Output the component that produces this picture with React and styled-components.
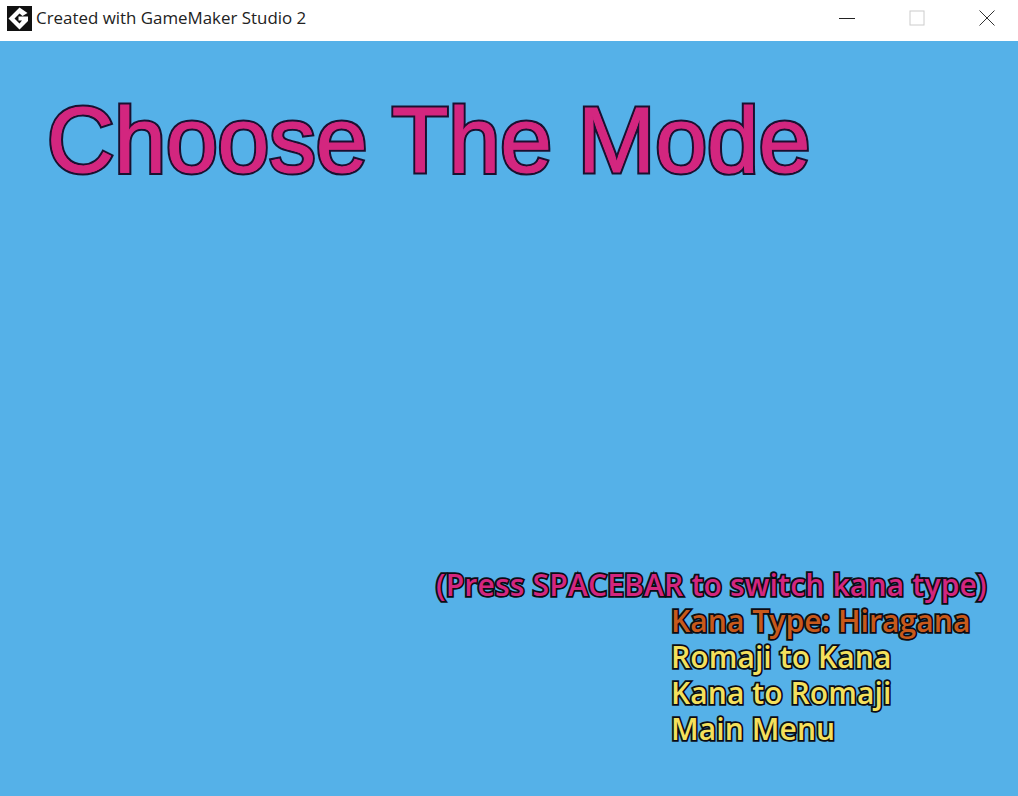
import styled, { createGlobalStyle } from 'styled-components';

const GlobalStyle = createGlobalStyle`
  html, body {
    margin: 0;
    padding: 0;
    overflow: hidden;
  }
`;

const Window = styled.div`
  display: flex;
  flex-direction: column;
  width: 1018px;
  height: 796px;
`;

const TitleBar = styled.div`
  display: flex;
  align-items: flex-start;
  height: 41px;
  background-color: #fff;
  flex-shrink: 0;
`;

const AppIcon = styled.svg`
  width: 25px;
  height: 25px;
  margin: 6px 4px 0 7px;
`;

const WindowTitle = styled.span`
  flex: 1;
  font-family: 'Open Sans', sans-serif;
  font-size: 16.9px;
  line-height: 36px;
  color: #222;
`;

const WindowButton = styled.div`
  display: flex;
  align-items: center;
  justify-content: center;
  box-sizing: border-box;
  width: 70px;
  height: 36px;
  padding-left: 7px;
  svg {
    display: block;
  }
`;

const Stage = styled.main`
  flex: 1;
  display: flex;
  flex-direction: column;
  justify-content: space-between;
  background-color: #55b1e8;
  padding: 42px 30px 49px 47px;
`;

const Heading = styled.h1`
  position: relative;
  margin: 0;
  font-family: 'Liberation Sans', Arial, sans-serif;
  font-weight: 400;
  font-size: 93px;
  line-height: 115px;
  color: #d3267f;
  -webkit-text-stroke: 5px #1a1030;
  paint-order: stroke fill;

  /* fattens the fill a little, the game font is heavier than the outline leaves it */
  &::after {
    content: attr(data-text);
    position: absolute;
    left: 0;
    top: 0;
    -webkit-text-stroke: 1px #d3267f;
  }
`;

const Menu = styled.div`
  display: flex;
  flex-direction: column;
  align-self: flex-end;
  width: 317px;
`;

const MenuItem = styled.div`
  font-family: 'Open Sans', sans-serif;
  font-size: 30px;
  font-weight: 600;
  line-height: 36px;
  letter-spacing: ${(p) => (p.$hint ? '0.2px' : '0.1px')};
  white-space: nowrap;
  color: ${(p) => p.$color || '#f4e05c'};
  -webkit-text-stroke: 3.5px #0c0c14;
  paint-order: stroke fill;
  text-shadow: 1px 1px 0 #0c0c14;
  ${(p) => p.$hint && 'margin-left: -235px;'}
`;

const App = () => {
  return (
    <Window>
      <GlobalStyle />
      <TitleBar>
        <AppIcon viewBox="0 0 25 25">
          <rect width="25" height="25" fill="#111" />
          <path
            d="M12.5 1.5 L1.5 12.5 L12.5 23.5 L21 15 L21 10.5 L11.5 10.5 L11.5 14.5 L15 14.5 L12.5 17.5 L7.5 12.5 L12.5 7.5 L15.5 10 L20.5 7 Z"
            fill="#fff"
          />
        </AppIcon>
        <WindowTitle>Created with GameMaker Studio 2</WindowTitle>
        <WindowButton>
          <svg width="16" height="16" viewBox="0 0 16 16">
            <path d="M0 8.5 H16" stroke="#222" strokeWidth="1" />
          </svg>
        </WindowButton>
        <WindowButton>
          <svg width="16" height="16" viewBox="0 0 16 16">
            <rect x="1" y="1" width="14" height="14" fill="none" stroke="#ccc" strokeWidth="1" />
          </svg>
        </WindowButton>
        <WindowButton>
          <svg width="16" height="16" viewBox="0 0 16 16">
            <path d="M0.5 0.5 L15.5 15.5 M15.5 0.5 L0.5 15.5" stroke="#333" strokeWidth="1" />
          </svg>
        </WindowButton>
      </TitleBar>
      <Stage>
        <Heading data-text="Choose The Mode">Choose The Mode</Heading>
        <Menu>
          <MenuItem $hint $color="#d3267f">(Press SPACEBAR to switch kana type)</MenuItem>
          <MenuItem $color="#c8591b">Kana Type: Hiragana</MenuItem>
          <MenuItem>Romaji to Kana</MenuItem>
          <MenuItem>Kana to Romaji</MenuItem>
          <MenuItem>Main Menu</MenuItem>
        </Menu>
      </Stage>
    </Window>
  );
};

export default App;
